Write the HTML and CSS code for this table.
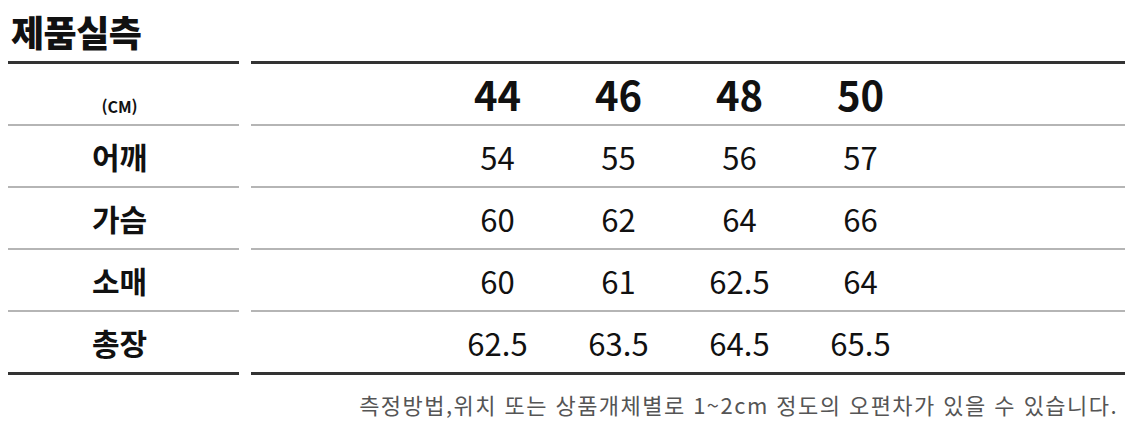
FILE: index.html
```html
<!DOCTYPE html>
<html lang="ko">
<head>
<meta charset="utf-8">
<link rel="stylesheet" href="styles.css">
</head>
<body>
<div class="wrap">
  <h1 class="title">제품실측</h1>
  <div class="table">
    <div class="cell label head unit">(CM)</div>
    <div class="cell vals head"><span>44</span><span>46</span><span>48</span><span>50</span></div>

    <div class="cell label">어깨</div>
    <div class="cell vals"><span>54</span><span>55</span><span>56</span><span>57</span></div>

    <div class="cell label">가슴</div>
    <div class="cell vals"><span>60</span><span>62</span><span>64</span><span>66</span></div>

    <div class="cell label">소매</div>
    <div class="cell vals"><span>60</span><span>61</span><span>62.5</span><span>64</span></div>

    <div class="cell label last">총장</div>
    <div class="cell vals last"><span>62.5</span><span>63.5</span><span>64.5</span><span>65.5</span></div>
  </div>
  <p class="note">측정방법,위치 또는 상품개체별로 1~2cm 정도의 오편차가 있을 수 있습니다.</p>
</div>
</body>
</html>
```
FILE: styles.css
```css
html, body {
  margin: 0;
  padding: 0;
  background: #fff;
}
body {
  font-family: "Noto Sans CJK KR", "Noto Sans", sans-serif;
  color: #111;
}
.wrap {
  width: 1125px;
  padding-left: 8px;
  box-sizing: border-box;
}
.title {
  margin: 0;
  height: 61px;
  display: flex;
  align-items: center;
  padding-left: 3px;
  font-size: 36px;
  font-weight: 900;
  line-height: 1;
  letter-spacing: -0.5px;
  color: #111;
}
.table {
  display: grid;
  grid-template-columns: 231px 874px;
  column-gap: 12px;
}
.cell {
  height: 60px;
  border-bottom: 2px solid #b5b5b5;
  display: flex;
  align-items: center;
}
.cell.head {
  border-top: 3px solid #333;
}
.cell.last {
  border-bottom: 3px solid #333;
}
.label {
  justify-content: center;
  font-size: 30px;
  font-weight: 700;
  padding-right: 8px;
  box-sizing: content-box;
}
.label.unit {
  font-size: 16px;
  padding-top: 24px;
  height: 36px;
}
.vals {
  padding-left: 186px;
  font-size: 31px;
  font-weight: 400;
}
.vals span {
  width: 121px;
  text-align: center;
}
.vals.head {
  font-size: 40px;
  font-weight: 700;
}
.note {
  margin: 13px 7px 0 0;
  text-align: right;
  font-size: 22px;
  color: #555;
  letter-spacing: 1.45px;
}
```
